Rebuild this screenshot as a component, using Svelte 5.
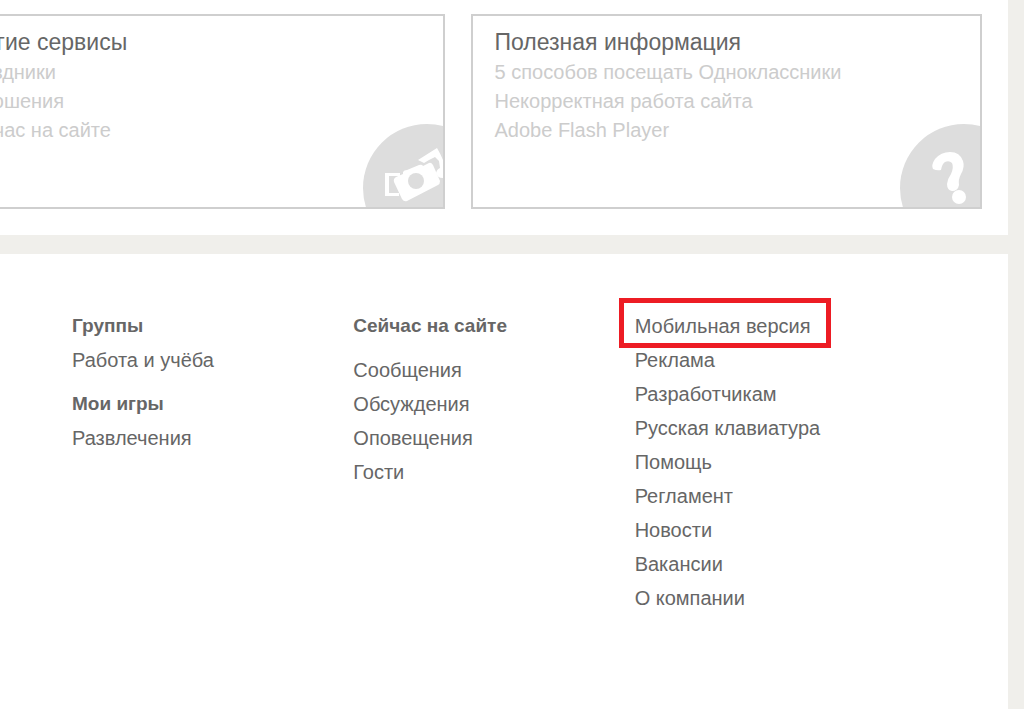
<script>
    const services = ['Праздники', 'Отношения', 'Сейчас на сайте'];
    const info = ['5 способов посещать Одноклассники', 'Некорректная работа сайта', 'Adobe Flash Player'];

    const about = [
        'Мобильная версия',
        'Реклама',
        'Разработчикам',
        'Русская клавиатура',
        'Помощь',
        'Регламент',
        'Новости',
        'Вакансии',
        'О компании'
    ];
</script>

<div class="page">
    <main>
        <div class="cards">
            <section class="card">
                <h2>Другие сервисы</h2>
                <ul>
                    {#each services as item}
                        <li><a href="#services">{item}</a></li>
                    {/each}
                </ul>
                <svg class="card-icon" width="80" height="83" viewBox="0 0 80 83" aria-hidden="true">
                    <circle cx="64" cy="64" r="64" fill="#ddd" />
                    <path d="M22 49H37V52H26V69H36V72H22Z" fill="#fff" />
                    <path d="M55 36L74 24Q77 29 80 36V54Q74 54 73 49Q74 45 77 44L76 37L72 33L66 36L61 39Z" fill="#fff" />
                    <path d="M33 53L40 50V48Q41 46 44 46L56 41Q59 40 60 42L66 39Q68 38 70 41L77 57Q77 60 75 61L44 77Q41 78 39 75L31 58Q30 55 33 53Z" fill="#fff" />
                    <circle cx="53" cy="57" r="8" fill="#ddd" />
                </svg>
            </section>
            <section class="card">
                <h2>Полезная информация</h2>
                <ul>
                    {#each info as item}
                        <li><a href="#info">{item}</a></li>
                    {/each}
                </ul>
                <svg class="card-icon" width="80" height="83" viewBox="0 0 80 83" aria-hidden="true">
                    <circle cx="64" cy="64" r="64" fill="#ddd" />
                    <path d="M33 45Q31 41 35 35Q41 28 50 28Q60 28 63 37Q65 43 61 50Q58 56 59 61Q58 67 52 67Q47 66 47 60Q48 54 51 50Q54 43 52 39Q49 36 45 38Q42 40 41 46Q37 47 33 45Z" fill="#fff" />
                    <circle cx="59" cy="73" r="7" fill="#fff" />
                </svg>
            </section>
        </div>
    </main>

    <footer>
        <div class="column">
            <h3>Группы</h3>
            <ul>
                <li><a href="#work">Работа и учёба</a></li>
            </ul>
            <h3>Мои игры</h3>
            <ul>
                <li><a href="#fun">Развлечения</a></li>
            </ul>
        </div>
        <div class="column">
            <h3 class="spaced">Сейчас на сайте</h3>
            <ul>
                <li><a href="#messages">Сообщения</a></li>
                <li><a href="#discussions">Обсуждения</a></li>
                <li><a href="#alerts">Оповещения</a></li>
                <li><a href="#guests">Гости</a></li>
            </ul>
        </div>
        <div class="column">
            <ul>
                {#each about as item, i}
                    <li><a href="#about" class:marked={i === 0}>{item}</a></li>
                {/each}
            </ul>
        </div>
    </footer>
</div>

<style>
    :global(body) {
        margin: 0;
        background: #f0efeb;
    }

    .page {
        display: flex;
        flex-direction: column;
        gap: 19px;
        min-height: 100vh;
        margin-right: 16px;
        overflow: hidden;
        font-family: "Liberation Sans", Arial, sans-serif;
        font-size: 20px;
        color: #666;
    }

    h2,
    h3,
    ul {
        margin: 0;
        padding: 0;
        list-style: none;
    }

    a {
        color: inherit;
        text-decoration: none;
    }

    a:hover {
        text-decoration: underline;
    }

    main {
        padding: 14px 26px 26px 0;
        background: #fff;
    }

    /* the first card starts outside of the window */
    .cards {
        display: grid;
        grid-template-columns: 1fr 1fr;
        gap: 26px;
        margin-left: -67px;
    }

    .card {
        position: relative;
        box-sizing: border-box;
        min-height: 195px;
        padding: 10px 22px;
        border: 2px solid #cfcfcf;
        overflow: hidden;
    }

    .card h2 {
        font-size: 23px;
        font-weight: normal;
        line-height: 32px;
    }

    .card ul {
        color: #ccc;
        line-height: 29px;
    }

    .card-icon {
        position: absolute;
        right: 0;
        bottom: 0;
    }

    footer {
        flex: 1;
        display: grid;
        grid-template-columns: repeat(3, 1fr);
        padding: 55px 92px 55px 72px;
        background: #fff;
        line-height: 34px;
    }

    h3 {
        font-size: 19px;
        font-weight: bold;
    }

    ul + h3 {
        margin-top: 10px;
    }

    .spaced {
        margin-bottom: 10px;
    }

    .marked {
        position: relative;
    }

    .marked::after {
        content: "";
        position: absolute;
        inset: -17px -20px -11px -16px;
        border: 5px solid #ed1c24;
    }
</style>
